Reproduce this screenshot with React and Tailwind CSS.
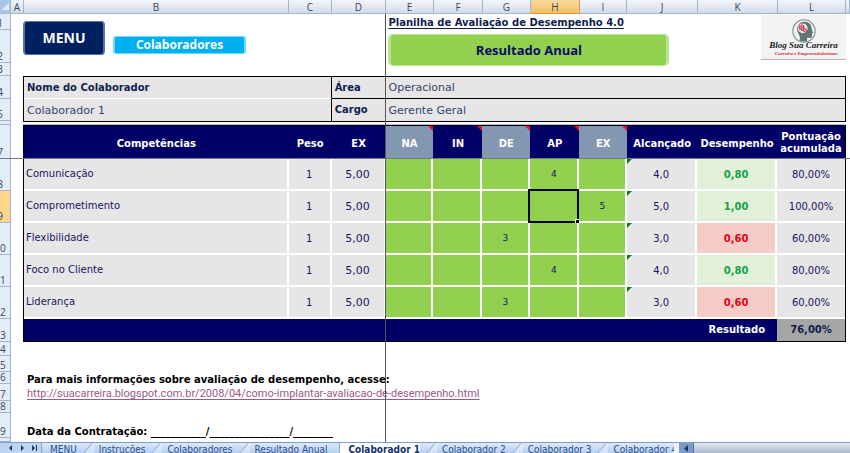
import React from "react";
import clsx from "clsx";

const columns = ["B", "C", "D", "E", "F", "G", "H", "I", "J", "K", "L"];
const columnShares = [265, 43, 54, 48, 49, 48, 49, 48, 70, 80, 68];
const totalShare = columnShares.reduce((a, b) => a + b, 0);

const sheetRows = [
  [1, "h-4"],
  [2, "h-[33px]"],
  [3, "h-[13px]"],
  [4, "h-[23px]"],
  [5, "h-[22px]"],
  [6, "h-1"],
  [7, "h-[34px]"],
  [8, "h-8"],
  [9, "h-8"],
  [10, "h-8"],
  [11, "h-8"],
  [12, "h-8"],
  [13, "h-[23px]"],
  [14, "h-[14px]"],
  [15, "h-4"],
  [16, "h-3"],
  [17, "h-[17px]"],
  [18, "h-3"],
  [19, "h-[25px]"],
  [20, "h-1"],
];

const levels = ["NA", "IN", "DE", "AP", "EX"];

const skills = [
  { name: "Comunicação", level: "AP", mark: 4, reached: "4,0", score: "0,80", good: true, total: "80,00%" },
  { name: "Comprometimento", level: "EX", mark: 5, reached: "5,0", score: "1,00", good: true, total: "100,00%", selected: "AP" },
  { name: "Flexibilidade", level: "DE", mark: 3, reached: "3,0", score: "0,60", good: false, total: "60,00%" },
  { name: "Foco no Cliente", level: "AP", mark: 4, reached: "4,0", score: "0,80", good: true, total: "80,00%" },
  { name: "Liderança", level: "DE", mark: 3, reached: "3,0", score: "0,60", good: false, total: "60,00%" },
];

const sheets = ["MENU", "Instruções", "Colaboradores", "Resultado Anual", "Colaborador 1", "Colaborador 2", "Colaborador 3", "Colaborador 4"];

function ColumnSizes() {
  return (
    <colgroup>
      {columnShares.map((share, i) => (
        <col key={i} style={{ width: `${(share / totalShare) * 100}%` }} />
      ))}
    </colgroup>
  );
}

function ColumnHeader() {
  const cell =
    "flex items-center justify-center border-r border-b border-[#9eb6ce] bg-linear-to-b from-[#f3f6fb] to-[#d3dbe9] leading-none";
  return (
    <div className="grid h-[14px] grid-cols-[11px_13px_265fr_43fr_54fr_48fr_49fr_48fr_49fr_47fr_71fr_80fr_68fr_4px] overflow-hidden font-['Open_Sans',sans-serif] text-[10px] text-[#38475c]">
      <div className="flex items-end justify-end border-r border-b border-[#9eb6ce] bg-[#a9c4e9] pb-[2px]">
        <svg className="size-[9px]" viewBox="0 0 9 9">
          <path d="M8 1v7H1z" fill="#e3edf9" />
        </svg>
      </div>
      <div className={cell}>A</div>
      {columns.map((c) => (
        <div key={c} className={c === "H" ? clsx(cell, "border-[#f29536] from-[#f9d99f] to-[#f1c15f]") : cell}>
          {c}
        </div>
      ))}
      <div className={cell} />
    </div>
  );
}

function RowHeader() {
  return (
    <div className="w-[11px] shrink-0 overflow-hidden border-r border-[#9eb6ce] bg-[#e4ecf7] font-['Open_Sans',sans-serif] text-[10px] text-[#38475c]">
      {sheetRows.map(([n, height]) => (
        <div
          key={n}
          className={clsx(
            height,
            "-ml-[11px] flex w-[22px] items-end justify-center overflow-hidden border-b border-[#9eb6ce] leading-[11px]",
            n === 9 && "bg-[#ffd58d]",
          )}
        >
          {n !== 6 && n !== 20 && n}
        </div>
      ))}
    </div>
  );
}

function Logo() {
  return (
    <div className="flex h-[45px] w-[85px] flex-col items-center border-b border-[#b5b5b5] bg-[#f4f3f3] pt-1">
      <svg className="h-6 w-6 shrink-0" viewBox="0 0 24 24">
        <circle cx="12" cy="12" r="11.2" fill="#f4f3f3" stroke="#7d8d8e" strokeWidth="1.1" />
        <path
          d="M7.5 21.5c.6-2.200.6-4-.6-6C5.300 13 4.600 10.500 5.500 7.800 6.700 4.300 9.700 2.500 13 2.700c4 .2 6.500 2.900 6.600 6.300 0 1 .1 1.700.6 2.600l1 1.800c.2.5 0 .8-.6.900l-.7.2.1 2.800c0 1.200-.7 1.700-1.900 1.600l-2-.2c-.8 0-1.100.5-1.100 1.300v2.200a11 11 0 0 1-7.500-.7z"
          fill="#5d7577"
        />
        <circle cx="10.800" cy="9.400" r="4.800" fill="#f2eeee" />
        <circle cx="9.800" cy="8.500" r="2.200" fill="none" stroke="#c9252c" strokeWidth="1.700" strokeDasharray="1.600 .5" />
        <circle cx="12.700" cy="11.200" r="1.500" fill="none" stroke="#c9252c" strokeWidth="1.300" strokeDasharray="1.200 .4" />
        <circle cx="9.800" cy="8.500" r="1" fill="#c9252c" />
      </svg>
      <div className="-mt-[3px] flex flex-col items-end font-['Liberation_Serif',serif] font-bold whitespace-nowrap italic">
        <span className="text-[9px] leading-[11px] text-[#151b28]">Blog Sua Carreira</span>
        <span className="text-[5px] leading-[5px] text-[#c9252c]">Carreira e Empreendedorismo</span>
      </div>
    </div>
  );
}

function TopBand() {
  return (
    <header className="grid h-[62px] grid-cols-[361fr_461fr]">
      <div className="flex items-start gap-2 pt-[7px]">
        <button
          type="button"
          className="h-[34px] w-[82px] rounded border border-x-2 border-[#5c719f] bg-[#002060] font-['Open_Sans',sans-serif] text-[14px] leading-none font-bold text-white"
        >
          MENU
        </button>
        <button
          type="button"
          className="mt-[15px] h-[18px] w-[133px] rounded-[3px] border border-x-2 border-[#6fd9f8] bg-[#00b0f0] font-['Open_Sans',sans-serif] text-[12px] leading-none font-bold text-white"
        >
          Colaboradores
        </button>
      </div>
      <div className="flex justify-between pl-1">
        <div className="flex flex-col gap-1">
          <h1 className="pt-[2px] text-[10px] leading-[14px] font-bold whitespace-nowrap text-[#0f1f4f] underline underline-offset-2">
            Planilha de Avaliação de Desempenho 4.0
          </h1>
          <button
            type="button"
            className="h-8 w-[281px] rounded-[5px] border border-x-[3px] border-[#b9e48f] bg-[#92d050] font-['Open_Sans',sans-serif] text-[13px] leading-none font-bold text-[#0b0b60]"
          >
            Resultado Anual
          </button>
        </div>
        <div className="pt-[1px]">
          <Logo />
        </div>
      </div>
    </header>
  );
}

function EmployeeTable() {
  const label = "px-[3px] text-left text-[10px] font-bold text-[#0d2450]";
  const value = "px-[3px] text-left text-[11px] text-[#32476f]";
  return (
    <table className="w-full table-fixed border-separate border-spacing-0 border border-black bg-[#e7e5e6]">
      <ColumnSizes />
      <tbody className="leading-none">
        <tr className="h-[22px]">
          <th scope="row" colSpan={2} className={clsx(label, "border-r border-b border-r-black border-b-white")}>
            Nome do Colaborador
          </th>
          <th scope="row" className={clsx(label, "border-b border-black")}>Área</th>
          <td colSpan={8} className={clsx(value, "border-b border-black")}>Operacional</td>
        </tr>
        <tr className="h-[22px]">
          <td colSpan={2} className={clsx(value, "border-r border-black")}>Colaborador 1</td>
          <th scope="row" className={label}>Cargo</th>
          <td colSpan={8} className={value}>Gerente Geral</td>
        </tr>
      </tbody>
    </table>
  );
}

function ScoreTable() {
  const heading = "relative border-t border-black p-0 pt-[2px]";
  const cell = "relative border-r-2 border-b-2 border-white bg-[#e6e6e6] p-0 pt-[2px]";
  return (
    <table className="w-full table-fixed border-separate border-spacing-0 border-x border-b border-black text-center text-[10px] leading-3 text-[#1b1464]">
      <ColumnSizes />
      <thead className="bg-[#000066] text-white">
        <tr className="h-[34px]">
          <th scope="col" className={heading}>Competências</th>
          <th scope="col" className={heading}>Peso</th>
          <th scope="col" className={heading}>EX</th>
          {levels.map((level, i) => (
            <th key={level} scope="col" className={clsx(heading, i % 2 === 0 && "bg-[#8497b0]")}>
              {level}
              <svg className="absolute top-0 right-0 size-[5px]" viewBox="0 0 5 5">
                <path d="M0 0h5v5z" fill="#d9142b" />
              </svg>
            </th>
          ))}
          <th scope="col" className={heading}>Alcançado</th>
          <th scope="col" className={heading}>Desempenho</th>
          <th scope="col" className="border-t border-black p-0">Pontuação acumulada</th>
        </tr>
      </thead>
      <tbody>
        {skills.map((s) => (
          <tr key={s.name} className="h-8">
            <th scope="row" className="border-r-2 border-b-2 border-white bg-[#e6e6e6] p-0 pl-[2px] text-left font-normal">
              {s.name}
            </th>
            <td className={cell}>1</td>
            <td className={clsx(cell, "text-[11px]")}>5,00</td>
            {levels.map((level) => (
              <td key={level} className="relative border-r-2 border-b-2 border-white bg-[#92d050] p-0 text-[9px]">
                {s.level === level && s.mark}
                {s.selected === level && (
                  <span className="absolute -inset-[2px] border-2 border-black">
                    <span className="absolute -right-[3px] -bottom-[3px] size-[5px] border-t border-l border-white bg-black" />
                  </span>
                )}
              </td>
            ))}
            <td className={cell}>
              {s.reached}
              <svg className="absolute top-0 left-0 size-[5px]" viewBox="0 0 5 5">
                <path d="M0 0h5L0 5z" fill="#0a7a22" />
              </svg>
            </td>
            <td
              className={clsx(
                "border-r-2 border-b-2 border-white p-0 pt-[2px] font-bold",
                s.good ? "bg-[#e2f0d9] text-[#16a34a]" : "bg-[#f4cbc6] text-[#e3000f]",
              )}
            >
              {s.score}
            </td>
            <td className="border-b-2 border-white bg-[#e6e6e6] p-0 pt-[2px]">{s.total}</td>
          </tr>
        ))}
      </tbody>
      <tfoot>
        <tr className="h-[22px] bg-[#000066] font-bold">
          <th scope="row" colSpan={10} className="p-0 pr-3 text-right text-white">
            Resultado
          </th>
          <td className="bg-[#a6a6a6] p-0 text-[#0d1c50]">76,00%</td>
        </tr>
      </tfoot>
    </table>
  );
}

function Slash() {
  return (
    <svg className="mx-[5px] h-[11px] w-3 shrink-0" viewBox="0 0 12 11">
      <path d="M12 .5h-2L1 11h11z" fill="#ffffff" fillOpacity=".35" />
      <path d="M10 .5L1 11" stroke="#8ba6cc" fill="none" />
    </svg>
  );
}

function SheetTabs() {
  return (
    <footer className="flex h-[11px] overflow-hidden border-t border-[#7d9cc8] bg-[#bcd3f2] text-[10px] leading-[14px] text-[#2f4f8a]">
      <div className="flex w-[42px] shrink-0 items-start justify-between border-r border-[#8ba6cc] pt-[2px] pr-1 pl-2">
        {["M4 0v6L1 3z", "M1 0v6l3-3z", "M0 0v6l3-3zM4 0h1v6H4z"].map((d, i) => (
          <button key={d} type="button" className="flex" aria-label={["Anterior", "Próxima", "Última"][i]}>
            <svg className="h-[6px] w-[5px]" viewBox="0 0 5 6">
              <path d={d} fill="#16366f" />
            </svg>
          </button>
        ))}
      </div>
      <nav className="flex min-w-0 flex-[634] items-start overflow-hidden bg-linear-to-b from-[#dce9fa] to-[#b7cff0] pl-2 font-['DejaVu_Sans_Condensed','DejaVu_Sans',sans-serif] whitespace-nowrap">
        {sheets.map((name, i) => (
          <React.Fragment key={name}>
            {i > 0 && i !== 4 && <Slash />}
            <button
              type="button"
              className={
                i === 4
                  ? "ml-3 h-[14px] shrink-0 border-l border-[#8ba6cc] bg-white pl-2 font-bold text-[#15326b]"
                  : "h-[14px] shrink-0"
              }
            >
              {name}
            </button>
          </React.Fragment>
        ))}
      </nav>
      <div className="flex min-w-0 flex-[174] border-l-[5px] border-[#eef3fa] bg-linear-to-b from-[#e4e9f1] to-[#a9b8d0]">
        <button type="button" aria-label="Rolar para a esquerda" className="flex w-[15px] justify-center border-r border-[#54719f] bg-[#7d9bc9] pt-[2px]">
          <svg className="h-[7px] w-[4px]" viewBox="0 0 4 7">
            <path d="M4 0v7L0 3.500z" fill="#16366f" />
          </svg>
        </button>
      </div>
    </footer>
  );
}

export default function App() {
  return (
    <div className="w-full overflow-hidden bg-white font-['DejaVu_Sans',sans-serif]">
      <ColumnHeader />
      <div className="relative flex">
        <RowHeader />
        <main className="relative min-w-0 flex-1 pr-1 pl-3">
          <TopBand />
          <EmployeeTable />
          <div className="h-[3px] border-b border-[#b9b9e4]" />
          <ScoreTable />
          <section className="pt-[31px] pl-1 text-[10px] leading-[14px] whitespace-nowrap text-black">
            <p className="font-bold">Para mais informações sobre avaliação de desempenho, acesse:</p>
            <a
              href="http://suacarreira.blogspot.com.br/2008/04/como-implantar-avaliacao-de-desempenho.html"
              className="font-[Roboto,sans-serif] text-[11px] text-[#9c5a86] underline underline-offset-2"
            >
              http://suacarreira.blogspot.com.br/2008/04/como-implantar-avaliacao-de-desempenho.html
            </a>
            <p className="pt-6 font-bold">Data da Contratação: ___________/________________/________</p>
          </section>
          <div className="pointer-events-none absolute inset-0 grid grid-cols-[363fr_460fr] pr-1 pl-3">
            <div className="border-r border-[#555555]" />
          </div>
        </main>
        <div className="pointer-events-none absolute inset-x-0 top-36 border-t border-[#77778c]" />
      </div>
      <SheetTabs />
    </div>
  );
}
